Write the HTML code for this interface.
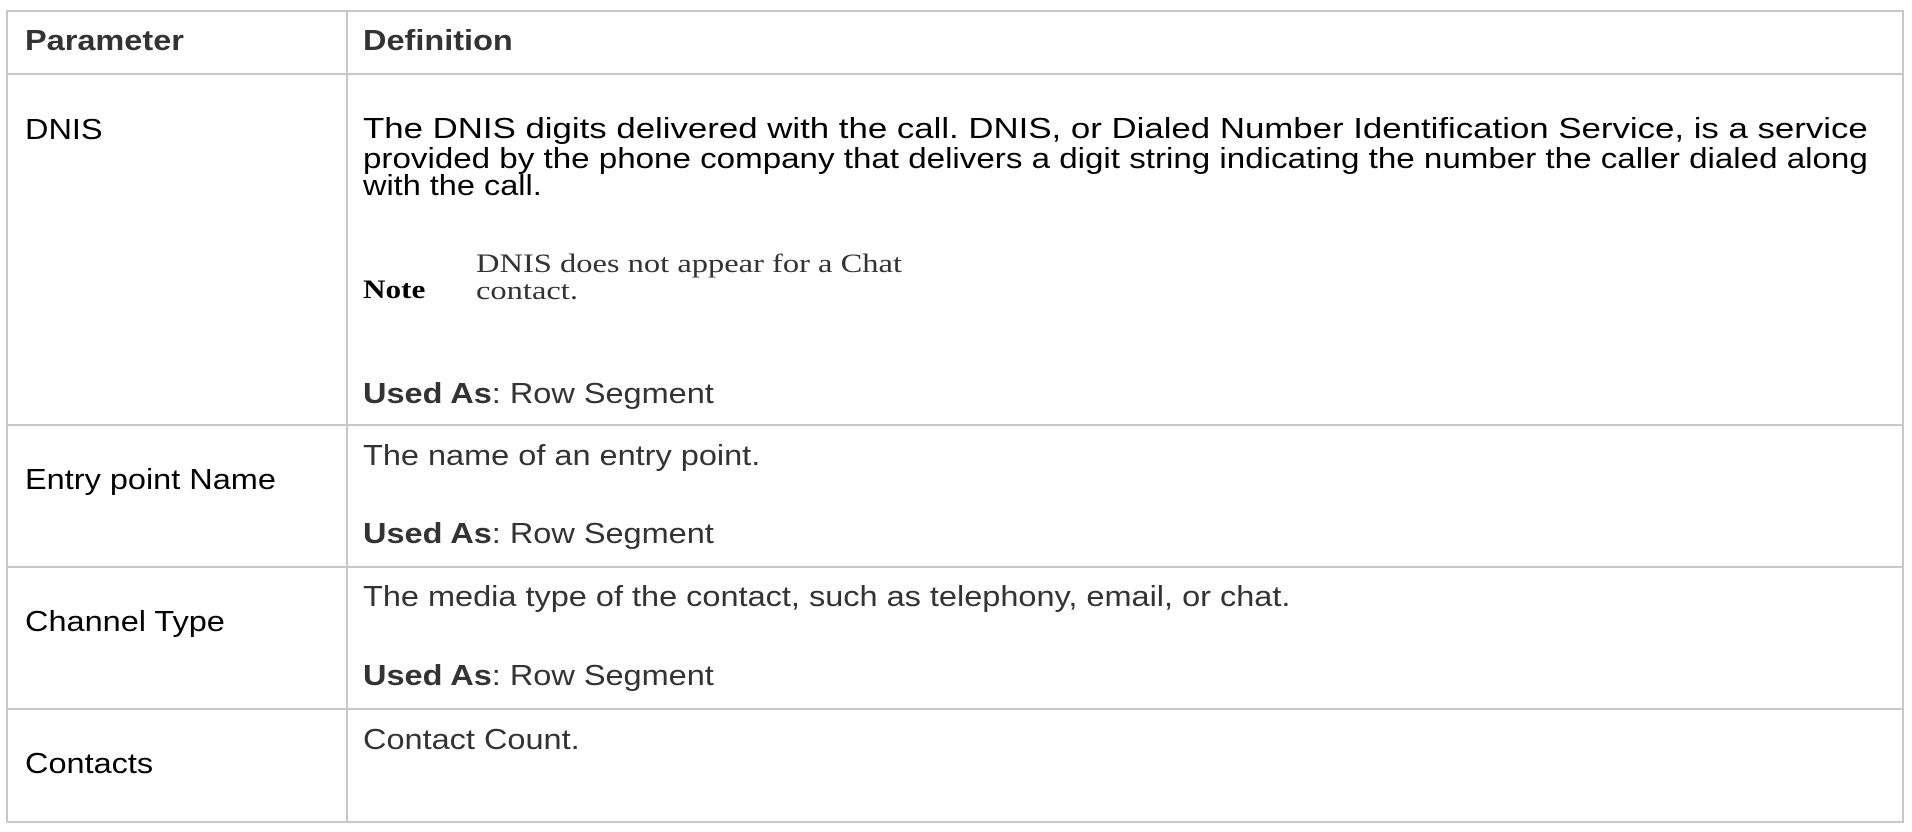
<!DOCTYPE html>
<html><head><meta charset="utf-8"><style>
html,body{margin:0;padding:0;background:#fff;width:1912px;height:832px;overflow:hidden;position:relative}
.l{position:absolute;background:#c8c8cc}
.t{position:absolute;white-space:nowrap;font-family:"Liberation Sans",Arial,sans-serif;font-size:29px;line-height:29px;transform:scaleX(1.12);transform-origin:0 0}
.k{color:#000}.g{color:#333}
.b{font-weight:bold}
.s{position:absolute;white-space:nowrap;font-family:"Liberation Serif","Times New Roman",serif;font-size:26px;line-height:26px;transform:scaleX(1.25);transform-origin:0 0;color:#333}
</style></head><body>
<div class="l" style="left:6px;top:10px;width:1898px;height:2px"></div>
<div class="l" style="left:6px;top:73px;width:1898px;height:2px"></div>
<div class="l" style="left:6px;top:424px;width:1898px;height:2px"></div>
<div class="l" style="left:6px;top:566px;width:1898px;height:2px"></div>
<div class="l" style="left:6px;top:708px;width:1898px;height:2px"></div>
<div class="l" style="left:6px;top:821px;width:1898px;height:2px"></div>
<div class="l" style="left:6px;top:10px;width:2px;height:813px"></div>
<div class="l" style="left:346px;top:10px;width:2px;height:813px"></div>
<div class="l" style="left:1902px;top:10px;width:2px;height:813px"></div>

<div class="t g b" style="left:25px;top:27px">Parameter</div>
<div class="t g b" style="left:363px;top:27px">Definition</div>

<div class="t k" style="left:25px;top:116px">DNIS</div>
<div class="t k" style="left:363px;top:115px;transform:scaleX(1.2)">The DNIS digits delivered with the call. DNIS, or Dialed Number Identification Service, is a service</div>
<div class="t k" style="left:363px;top:145px;transform:scaleX(1.1425)">provided by the phone company that delivers a digit string indicating the number the caller dialed along</div>
<div class="t k" style="left:363px;top:172px">with the call.</div>
<div class="s" style="left:363px;top:277px;color:#000;font-weight:bold;transform:scaleX(1.2)">Note</div>
<div class="s" style="left:476px;top:251px">DNIS does not appear for a Chat</div>
<div class="s" style="left:476px;top:278px">contact.</div>
<div class="t g" style="left:363px;top:380px"><b>Used As</b>: Row Segment</div>

<div class="t k" style="left:25px;top:466px">Entry point Name</div>
<div class="t g" style="left:363px;top:442px">The name of an entry point.</div>
<div class="t g" style="left:363px;top:520px"><b>Used As</b>: Row Segment</div>

<div class="t k" style="left:25px;top:608px">Channel Type</div>
<div class="t g" style="left:363px;top:583px">The media type of the contact, such as telephony, email, or chat.</div>
<div class="t g" style="left:363px;top:662px"><b>Used As</b>: Row Segment</div>

<div class="t k" style="left:25px;top:750px">Contacts</div>
<div class="t g" style="left:363px;top:726px">Contact Count.</div>
</body></html>
